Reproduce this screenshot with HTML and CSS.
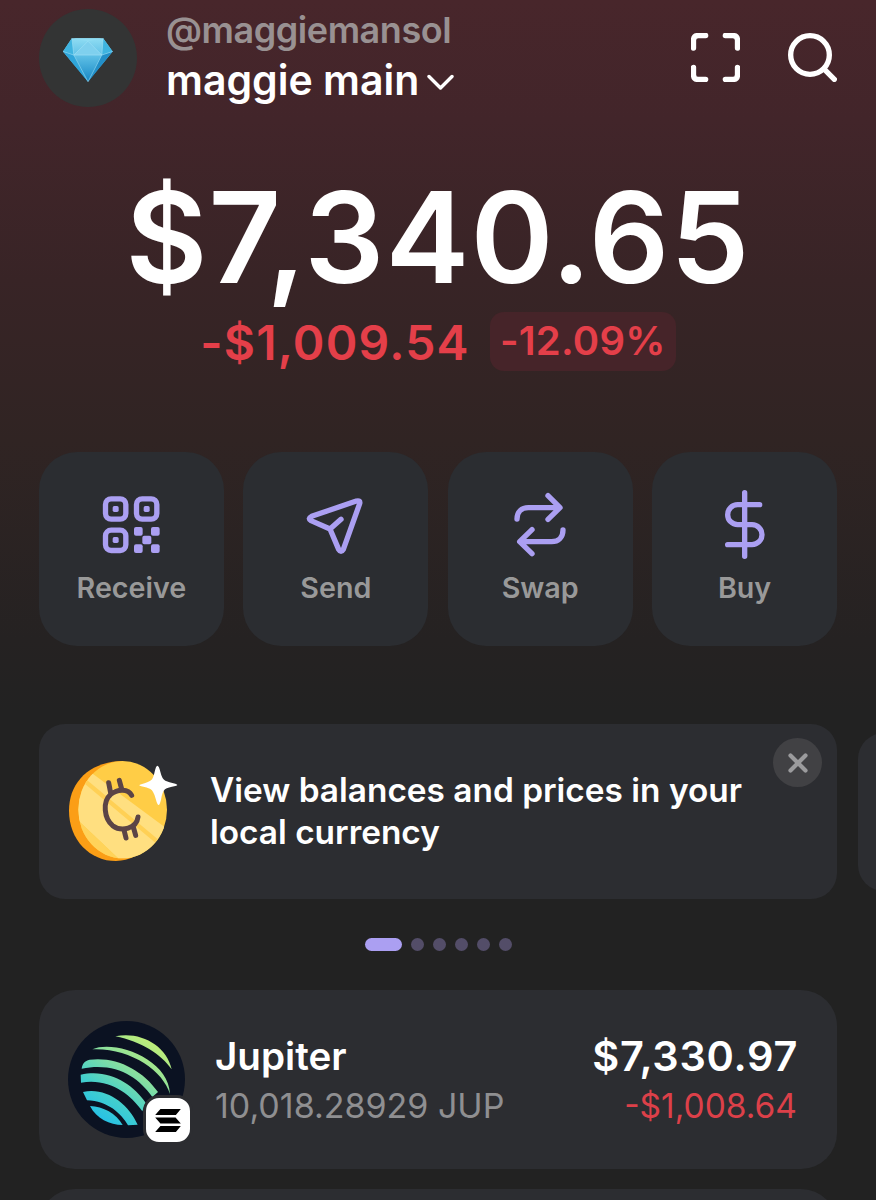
FILE: index.html
```html
<!DOCTYPE html>
<html lang="en">
<head>
<meta charset="utf-8">
<title>Wallet</title>
<link rel="stylesheet" href="styles.css">
</head>
<body>
<div class="screen">
  <header class="header">
    <div class="avatar">
      <svg class="gem" viewBox="186 114 158 138">
        <defs>
          <linearGradient id="gemBody" x1="0" y1="0" x2="0" y2="1"><stop offset="0" stop-color="#8fdcf3"/><stop offset=".4" stop-color="#5fc0e6"/><stop offset="1" stop-color="#1687c4"/></linearGradient>
        </defs>
        <path d="M216 117H311L340 157L265 249L189 157Z" fill="url(#gemBody)"/>
        <path d="M189 157L216 117L222 168Z" fill="#3fb4e0"/>
        <path d="M340 157L311 117L307 168Z" fill="#3fb4e0"/>
        <path d="M216 117H311L265 126Z" fill="#8fdcf3"/>
        <path d="M265 126L307 168H222Z" fill="#7fd0ee"/>
        <path d="M189 157L222 168L265 249Z" fill="#2fa5da"/>
        <path d="M340 157L307 168L265 249Z" fill="#228fc8"/>
        <path d="M189 157L222 168H307L340 157M216 117L222 168L265 126L307 168L311 117M222 168L265 249L307 168" fill="none" stroke="#a6e4f7" stroke-width="1.6"/>
      </svg>
    </div>
    <div class="account">
      <div class="handle">@maggiemansol</div>
      <div class="name"><span>maggie main</span>
        <svg class="chevron" viewBox="0 0 27 17"><path d="M2 2.5L13.5 14L25 2.5"/></svg>
      </div>
    </div>
    <div class="tools">
      <svg class="tool" viewBox="93 99 147 147"><path d="M100.500 144V121Q100.500 106.500 115 106.500H137M196 106.500H218Q232.500 106.500 232.500 121V144M232.500 202V224Q232.500 238.500 218 238.500H196M137 238.500H115Q100.500 238.500 100.500 224V202"/></svg>
      <svg class="tool" viewBox="385 99 147 147"><circle cx="451" cy="165" r="58"/><path d="M495 209L524 238"/></svg>
    </div>
  </header>

  <section class="balance">
    <div class="total">$7,340.65</div>
    <div class="change">
      <span class="delta">-$1,009.54</span>
      <span class="percent">-12.09%</span>
    </div>
  </section>

  <nav class="actions">
    <div class="action">
      <svg class="action-icon" viewBox="184 135 240 240">
        <g class="line"><rect x="227.500" y="176.500" width="61" height="61" rx="17"/><rect x="320.500" y="176.500" width="61" height="61" rx="17"/><rect x="227.500" y="270.500" width="61" height="61" rx="17"/></g>
        <g class="solid"><rect x="249" y="198" width="18" height="18" rx="5"/><rect x="342" y="198" width="18" height="18" rx="5"/><rect x="249" y="291" width="18" height="18" rx="5"/><rect x="313" y="261" width="26" height="26" rx="6"/><rect x="364" y="261" width="26" height="26" rx="6"/><rect x="338" y="287" width="27" height="26" rx="6"/><rect x="313" y="313" width="26" height="26" rx="6"/><rect x="364" y="313" width="26" height="26" rx="6"/></g>
      </svg>
      <span class="label">Receive</span>
    </div>
    <div class="action">
      <svg class="action-icon" viewBox="798 135 240 240"><path class="line" d="M979 183L845 229Q832 236 843 242L900 267L926 328Q933 340 940 328L989 191Q992 180 979 183ZM900 267L933 238"/></svg>
      <span class="label">Send</span>
    </div>
    <div class="action">
      <svg class="action-icon" viewBox="181 135 240 240"><path class="line" d="M232 237C232 215 246 203 266 203H360M325 167L361 203L325 238M370 270C370 292 356 305 336 305H242M277 269L240 305L277 341"/></svg>
      <span class="label">Swap</span>
    </div>
    <div class="action">
      <svg class="action-icon" viewBox="794 135 240 240"><path class="line" d="M913 158V349M958 194H892A30 30 0 0 0 892 254H935A30 30 0 0 1 935 314H862"/></svg>
      <span class="label">Buy</span>
    </div>
  </nav>

  <section class="carousel">
    <article class="banner">
      <svg class="coin" viewBox="117 138 327 300">
        <defs>
          <clipPath id="coinFace"><ellipse cx="278" cy="284" rx="133" ry="146"/></clipPath>
        </defs>
        <path d="M278 138C180 140 117 200 117 287C117 375 180 438 258 438Q290 436 310 426Z" fill="#fb9e16"/>
        <g clip-path="url(#coinFace)">
          <rect x="117" y="130" width="300" height="310" fill="#ffcd46"/>
          <path d="M182 172L420 348V440H275L140 312V172Z" fill="#ffdf80"/>
          <path d="M155 190L400 395" stroke="#ffd055" stroke-width="13"/>
          <path d="M140 312L275 440H140Z" fill="#ffd35a"/>
        </g>
        <path d="M305 241C295 222 265 220 242 238C217 260 222 310 248 332C275 352 320 340 324 306M242 234L236 203M275 222L268 196M282 345L288 369M310 336L317 361" fill="none" stroke="#5b4446" stroke-width="15" stroke-linecap="round"/>
        <path d="M382 152Q387 152 391 170Q396 192 406 197Q416 202 436 206Q448 210 436 213Q414 217 405 223Q397 230 393 254Q389 270 386 270Q382 270 377 251Q371 228 361 222Q352 217 334 214Q322 211 334 208Q355 202 363 196Q370 190 374 170Q378 152 382 152Z" fill="#fff"/>
      </svg>
      <p class="banner-text">View balances and prices in your local currency</p>
      <div class="close"><svg viewBox="0 0 20 20"><path d="M2.500 2.500L17.500 17.500M17.500 2.500L2.500 17.500"/></svg></div>
    </article>
    <article class="banner-next"></article>
  </section>

  <div class="dots"><i class="dot current"></i><i class="dot"></i><i class="dot"></i><i class="dot"></i><i class="dot"></i><i class="dot"></i></div>

  <section class="tokens">
    <article class="token">
      <div class="token-logo">
        <svg class="jup" viewBox="115 122 351 351">
          <defs>
            <linearGradient id="jupBands" gradientUnits="userSpaceOnUse" x1="210" y1="430" x2="380" y2="180"><stop offset="0" stop-color="#22bfea"/><stop offset=".3" stop-color="#45d0cb"/><stop offset=".6" stop-color="#86dfa0"/><stop offset="1" stop-color="#c5ef75"/></linearGradient>
          </defs>
          <circle cx="290.500" cy="297.500" r="175.500" fill="#0b1222"/>
          <g fill="url(#jupBands)">
            <path d="M257 168C330 152 411 194 426 267C394 222 335 184 257 168Z"/>
            <path d="M188 207C255 178 417 235 421 341C400 270 300 202 188 207Z"/>
            <path d="M156 265C158 250 165 241 180 238C260 228 338 268 385 335L368 350C325 290 260 245 156 265Z"/>
            <path d="M153 283C240 264 310 312 348 367L338 393C300 340 240 293 154 307Z"/>
            <path d="M160 335C230 320 295 370 324 433L295 435C275 400 235 362 172 360Z"/>
            <path d="M181 377C220 378 260 400 279 434C240 434 200 415 181 377Z"/>
          </g>
        </svg>
        <div class="network">
          <svg viewBox="0 0 78 70"><path d="M16 0H78L63 18H0ZM0 26H62L78 44H16ZM16 52H78L63 70H0Z"/></svg>
        </div>
      </div>
      <div class="token-info"><div class="token-name">Jupiter</div><div class="token-amount">10,018.28929 JUP</div></div>
      <div class="token-values"><div class="token-usd">$7,330.97</div><div class="token-change">-$1,008.64</div></div>
    </article>
    <article class="token"></article>
  </section>
</div>
</body>
</html>
```
FILE: styles.css
```css
* { box-sizing: border-box; }
body { margin: 0; background: #222; font-family: Inter, "Liberation Sans", sans-serif; color: #fff; }
svg { display: block; }
.screen { width: 876px; height: 1200px; overflow: hidden; padding: 9px 39px 0; display: flex; flex-direction: column; background: linear-gradient(#48262b 0, #42252a 120px, #382426 280px, #302423 440px, #252222 640px, #222 710px); }
.header { display: flex; height: 98px; flex: none; }
.avatar { width: 98px; height: 98px; border-radius: 50%; background: #333434; display: flex; align-items: center; justify-content: center; }
.gem { width: 52px; height: 46px; margin-top: 4px; }
.account { margin-left: 29px; white-space: nowrap; }
.handle { color: #999192; font-size: 36px; font-weight: 600; letter-spacing: -.45px; line-height: 44px; margin-top: -1px; }
.name { display: flex; align-items: center; font-size: 41px; font-weight: 600; line-height: 50px; margin-top: 3px; }
.chevron { width: 27px; height: 17px; margin-left: 8px; margin-top: 4px; }
.chevron path { fill: none; stroke: #fff; stroke-width: 3.4; stroke-linecap: round; stroke-linejoin: round; }
.tools { margin-left: auto; display: flex; gap: 48px; padding-top: 24px; }
.tool { width: 49px; height: 49px; fill: none; stroke: #fff; stroke-width: 16; stroke-linecap: round; }
.balance { display: flex; flex-direction: column; align-items: center; height: 345px; flex: none; }
.total { font-size: 126px; font-weight: 600; letter-spacing: 1px; line-height: 150px; margin-top: 55px; white-space: nowrap; }
.change { display: flex; align-items: flex-start; gap: 20px; color: #e43f49; font-weight: 600; white-space: nowrap; }
.delta { font-size: 48px; letter-spacing: 1.2px; line-height: 62px; }
.percent { width: 186px; height: 59px; border-radius: 14px; background: #462429; font-size: 40px; letter-spacing: .2px; line-height: 57px; text-align: center; }
.actions { display: grid; grid-template-columns: repeat(4, 1fr); gap: 19.500px; height: 194px; flex: none; }
.action { background: #2b2d31; border-radius: 38px; display: flex; flex-direction: column; align-items: center; padding-top: 33px; }
.action-icon { width: 80px; height: 80px; }
.line { fill: none; stroke: #ab9ff2; stroke-width: 16; stroke-linecap: round; stroke-linejoin: round; }
.solid { fill: #ab9ff2; }
.label { color: #999; font-size: 28.700px; font-weight: 600; line-height: 36px; margin-top: 5px; }
.carousel { display: flex; align-items: center; gap: 21px; margin-top: 78px; height: 175px; flex: none; }
.banner, .banner-next { background: #2c2d31; border-radius: 26px; flex: none; width: 798px; }
.banner { height: 175px; position: relative; display: flex; padding: 37px 0 0 30px; }
.banner-next { height: 158px; }
.coin { width: 109px; height: 100px; flex: none; }
.banner-text { margin: 8px 0 0 32px; width: 560px; font-size: 33.400px; font-weight: 600; line-height: 42px; }
.close { position: absolute; right: 15px; top: 14px; width: 49px; height: 49px; border-radius: 50%; background: #414144; display: flex; align-items: center; justify-content: center; }
.close svg { width: 20px; height: 20px; fill: none; stroke: #9b9b9d; stroke-width: 4.200; stroke-linecap: round; }
.dots { display: flex; justify-content: center; gap: 9.500px; margin-top: 39px; flex: none; }
.dot { width: 12.500px; height: 12.500px; border-radius: 7px; background: #534d68; }
.dot.current { width: 37px; background: #ab9ff2; }
.tokens { display: flex; flex-direction: column; gap: 20px; margin-top: 39.500px; flex: none; }
.token { height: 179px; border-radius: 36px; background: #2c2d31; padding: 31px 40px 0 29px; display: flex; white-space: nowrap; }
.token-logo { position: relative; width: 117px; height: 117px; }
.jup { width: 117px; height: 117px; }
.network { position: absolute; left: 75px; top: 74px; width: 50px; height: 50px; border: 3px solid #2c2d31; border-radius: 16px; background: #fff; display: flex; align-items: center; justify-content: center; }
.network svg { width: 26px; height: 23px; }
.token-info { margin-left: 30px; }
.token-name { font-size: 38.600px; font-weight: 600; line-height: 48px; margin-top: 11px; }
.token-amount { font-size: 34px; line-height: 42px; color: #8f8f91; margin-top: 5px; }
.token-values { margin-left: auto; text-align: right; }
.token-usd { font-size: 41.500px; font-weight: 600; letter-spacing: .7px; line-height: 48px; margin: 11px -1px 0 0; }
.token-change { font-size: 33.500px; line-height: 42px; color: #dc4049; margin-top: 5px; }
```
